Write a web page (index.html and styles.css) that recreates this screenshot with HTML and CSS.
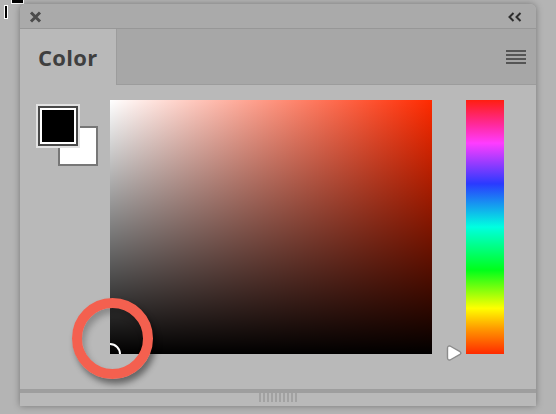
FILE: index.html
```html
<!DOCTYPE html>
<html lang="en">
<head>
    <meta charset="UTF-8">
    <meta name="viewport" content="width=device-width, initial-scale=1.0">
    <title>Color</title>
    <link rel="stylesheet" href="styles.css">
</head>
<body>
    <div class="cursor"><span class="cursor-bar"></span><span class="cursor-beam"></span></div>

    <div class="panel">
        <div class="titlebar">
            <svg class="close" width="13" height="12" viewBox="0 0 13 12">
                <path d="M2 1.5 L11 10.5 M11 1.5 L2 10.5" stroke="#4b4b4b" stroke-width="3" fill="none"/>
            </svg>
            <svg class="collapse" width="14" height="10" viewBox="0 0 14 10">
                <path d="M5.5 1 L1.5 5 L5.5 9 M12.5 1 L8.5 5 L12.5 9" stroke="#2e2e2e" stroke-width="2" fill="none"/>
            </svg>
        </div>

        <div class="tabs">
            <div class="tab">Color</div>
            <div class="tab-rest">
                <div class="menu"><span></span><span></span><span></span><span></span></div>
            </div>
        </div>

        <div class="content">
            <div class="swatches">
                <div class="swatch-fg"></div>
                <div class="swatch-bg"></div>
            </div>
            <div class="field">
                <div class="picker"></div>
            </div>
            <div class="hue-wrap">
                <div class="hue"></div>
                <svg class="hue-thumb" width="17" height="18" viewBox="0 0 17 18">
                    <path d="M4 2 Q1.5 1.5 1.5 4.5 L1.5 13.5 Q1.5 16.5 4 16 L14 10.3 Q15.8 9 14 7.7 Z" fill="#fff" stroke="#8c8c8c" stroke-width="1.4" stroke-linejoin="round"/>
                </svg>
            </div>
        </div>

        <div class="footer">
            <div class="grip"><span></span><span></span><span></span><span></span><span></span><span></span><span></span><span></span><span></span><span></span></div>
        </div>

        <!-- highlight ring drawn over the field corner -->
        <div class="ring"></div>
    </div>
</body>
</html>
```

FILE: styles.css
```css
body { margin: 0; background-color: #b4b4b4; font-family: "Open Sans", "DejaVu Sans", sans-serif; width: 556px; height: 414px; overflow: hidden; position: relative; }

.cursor { position: absolute; left: 3px; top: 0; }
.cursor-bar { position: absolute; left: 8px; top: 0; width: 11px; height: 3px; background: #000; border: 1px solid #fff; border-top: none; }
.cursor-beam { position: absolute; left: 1px; top: 5px; width: 2px; height: 12px; background: #000; border: 1px solid #fff; }

.panel { position: relative; margin: 4px 0 0 20px; width: 516px; height: 402px; display: flex; flex-direction: column; background-color: #b9b9b9; border-radius: 6px 6px 0 0; box-shadow: 0 0 7px rgba(0, 0, 0, 0.35); }

.titlebar { height: 24px; flex: none; display: flex; align-items: center; justify-content: space-between; padding: 0 14px 0 9px; background-color: #aaaaaa; border-bottom: 1px solid #979797; border-radius: 6px 6px 0 0; }
.close { margin-top: 1px; }
.collapse { margin-top: 1px; }

.tabs { height: 56px; flex: none; display: flex; background-color: #a7a7a7; }
.tab { width: 78px; padding-left: 18px; background-color: #b9b9b9; font-size: 22px; font-weight: 700; color: #3f3f3f; line-height: 56px; letter-spacing: 0.3px; }
.tab-rest { flex: 1; display: flex; justify-content: flex-end; align-items: center; border-left: 1px solid #9c9c9c; border-bottom: 1px solid #9c9c9c; padding-right: 10px; }
.menu { display: flex; flex-direction: column; gap: 2px; margin-top: 1px; }
.menu span { display: block; width: 20px; height: 2px; background: #555; }

.content { flex: 1; display: flex; padding: 15px 0 0 16px; }

.swatches { position: relative; width: 74px; flex: none; padding-top: 4px; }
.swatch-bg { position: absolute; left: 22px; top: 26px; width: 36px; height: 36px; background: #fff; border: 2px solid #777; }
.swatch-fg { position: relative; z-index: 1; width: 32px; height: 32px; background: #000; border: 2px solid #fff; box-shadow: 0 0 0 2px #484848, 0 0 0 4px #e2e2e2; margin: 4px; }

.field { position: relative; width: 322px; height: 254px; flex: none; overflow: hidden;
    background: linear-gradient(to bottom, rgba(0, 0, 0, 0), #000), linear-gradient(to right, #fff, rgba(255, 255, 255, 0)), #ff2a00; }
.picker { position: absolute; left: -11px; bottom: -11px; width: 18px; height: 18px; border: 2px solid #fff; border-radius: 50%; }

.hue-wrap { position: relative; margin-left: 34px; }
.hue { width: 38px; height: 254px; background: linear-gradient(to bottom, #ff1e10 0%, #ff2aa0 10%, #ff3cff 17%, #2a3aff 33%, #00ffe0 50%, #00ff1a 67%, #ffff00 82%, #ff9a00 90%, #ff2a00 100%); }
.hue-thumb { position: absolute; left: -20px; top: 244px; }

.footer { height: 13px; flex: none; border-top: 4px solid #9e9e9e; display: flex; justify-content: center; background-color: #b9b9b9; }
.grip { display: flex; gap: 2px; }
.grip span { width: 2px; height: 9px; background: #a2a2a2; }

.ring { position: absolute; left: 52px; top: 294px; width: 61px; height: 61px; border: 10px solid #f4604f; border-radius: 50%; box-shadow: 3px 5px 6px rgba(0, 0, 0, 0.45), inset 3px 5px 6px rgba(0, 0, 0, 0.25); }
```
